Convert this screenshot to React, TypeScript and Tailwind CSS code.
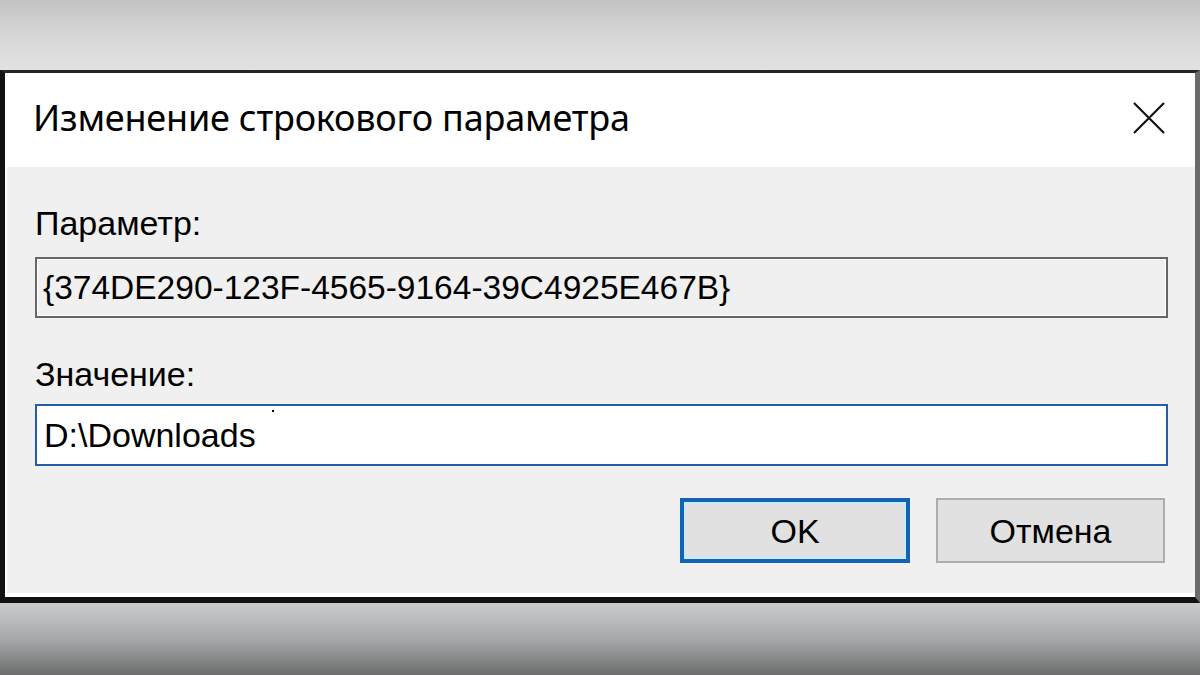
const fieldFont = { fontFamily: '"Liberation Sans", Arial, sans-serif' };

function CloseIcon() {
  return (
    <svg width="32" height="32" viewBox="0 0 32 32" fill="none">
      <path d="M1 1L31 31M31 1L1 31" stroke="#111" strokeWidth="2.2" />
    </svg>
  );
}

export default function App() {
  return (
    <div
      className="flex h-[675px] w-[1200px] flex-col overflow-hidden text-black"
      style={fieldFont}
    >
      {/* blurred desktop behind the dialog */}
      <div className="h-[70px] shrink-0 bg-linear-to-b from-[#c3c3c3] via-[#d6d6d6] to-[#e2e2e2]" />

      <div className="flex shrink-0 flex-col border-t-[3px] border-r-[5px] border-b-[6px] border-l-[5px] border-t-[#262626] border-r-[#6a6a6a] border-b-[#111] border-l-[#111]">
        <div className="flex h-[94px] items-center justify-between bg-white pr-[30px] pb-[4px] pl-[28px]">
          <h1 className="font-['Noto_Sans'] text-[36px] leading-none tracking-[-0.2px]">
            Изменение строкового параметра
          </h1>
          <CloseIcon />
        </div>

        <div className="flex flex-col border-b-[4px] border-l-[2px] border-b-white border-l-white bg-[#f0f0f0] pt-[39px] pr-[27px] pb-[30px] pl-[28px]">
          <label className="text-[34px] leading-none">Параметр:</label>
          <div className="mt-[17px] flex h-[61px] items-center border-2 border-[#666] bg-[#f0f0f0] pl-[6px] text-[33.5px] leading-none shadow-[inset_0_0_0_1px_#ffffff]">
            {"{374DE290-123F-4565-9164-39C4925E467B}"}
          </div>

          <label className="mt-[39px] text-[34px] leading-none">Значение:</label>
          <div className="relative mt-[13px] flex h-[62px] items-center border-2 border-[#2260a6] bg-white pl-[7px] text-[34px] leading-none">
            D:\Downloads
            <span className="absolute top-[4px] left-[235px] h-[2px] w-[2px] bg-black" />
          </div>

          <div className="mt-[32px] mr-[3px] flex justify-end gap-[26px]">
            <button className="flex h-[65px] w-[230px] items-center justify-center border-[4px] border-[#1462b4] bg-[#e1e1e1] text-[34px] leading-none shadow-[inset_0_0_0_2px_#c4ecfb]">
              OK
            </button>
            <button className="flex h-[65px] w-[229px] items-center justify-center border-2 border-[#adadad] bg-[#e1e1e1] text-[34px] leading-none">
              Отмена
            </button>
          </div>
        </div>
      </div>

      <div className="flex-1 bg-linear-to-b from-[#cacbcc] via-[#a6a9ac] to-[#6d6d6d]" />
    </div>
  );
}
